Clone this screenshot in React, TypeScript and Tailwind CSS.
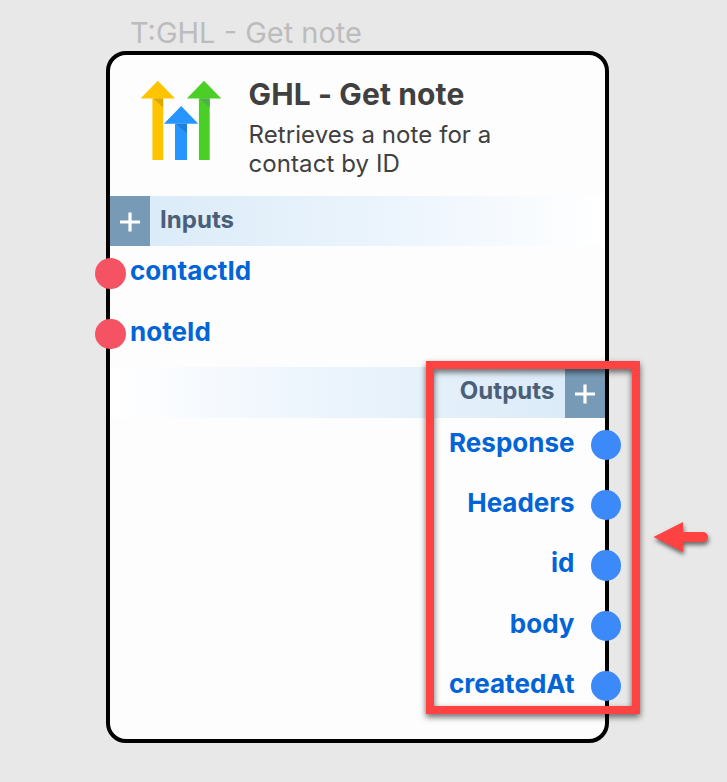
import type { ReactNode } from "react";

const inputs = ["contactId", "noteId"];
const outputs = ["Response", "Headers", "id", "body", "createdAt"];

function GhlLogo() {
  return (
    <svg className="mt-[25px] ml-[30px] h-[82px] w-[84px] shrink-0" viewBox="0 0 84 82">
      <path d="M17.8 0.7 35.1 18.4H0.6Z" fill="#ffc400" />
      <path d="M12.4 18.4h10.8V80H12.4Z" fill="#ffc400" />
      <path d="M13.2 18.4h10V27.5Z" fill="#d9a900" />
      <path d="M64 0.7 81.3 18.4H46.8Z" fill="#4bcf27" />
      <path d="M58.9 18.4h10.8V80H58.9Z" fill="#4bcf27" />
      <path d="M59.7 18.4h10V27.5Z" fill="#4cb04e" />
      <path d="M41.2 26 58.3 43.8H23.9Z" fill="#2795ff" />
      <path d="M35 43.8h12V80h-12Z" fill="#2795ff" />
      <path d="M35.7 43.8h11.3V53.6Z" fill="#1d80df" />
    </svg>
  );
}

function PlusBox() {
  return (
    <div className="flex h-full w-10 shrink-0 items-center justify-center bg-[#779bb7]">
      <svg width="20" height="20" viewBox="0 0 20 20" className="mt-[3px]">
        <path d="M10 0.5v19M0 10h20" stroke="#fff" strokeWidth="3.2" />
      </svg>
    </div>
  );
}

function InputRow({ children }: { children: ReactNode }) {
  return (
    <div className="-ml-[14.5px] flex h-[60.6px] items-start">
      <span className="mt-[12px] h-[30.5px] w-[30.5px] rounded-full bg-[#f55364]" />
      <span className="ml-[4.5px] mt-[7px] leading-9 tracking-[0.05px]">{children}</span>
    </div>
  );
}

function OutputRow({ children }: { children: ReactNode }) {
  return (
    <div className="-mr-4 flex h-[60.35px] items-start justify-end">
      <span className="mr-4 mt-[7px] leading-9">{children}</span>
      <span className="mt-[12px] h-[30.5px] w-[30.5px] rounded-full bg-[#3c8afa]" />
    </div>
  );
}

export default function App() {
  return (
    <div className="relative h-[782px] w-[727px] overflow-hidden bg-[#e8e8e8] pl-[105.5px] pt-[15px] font-['Inter',sans-serif]">
      <div className="h-9 pl-[24.5px] text-[29px] leading-9 whitespace-nowrap text-[#bcbcbc]">T:GHL - Get note</div>
      <div className="h-[692px] w-[503.5px] rounded-[20px] border-4 border-black bg-[#fdfdfd]">
        <div className="flex h-[140.5px]">
          <GhlLogo />
          <div className="ml-[25px] mt-[20px] text-[#404040]">
            <h1 className="text-[30px] leading-[38px] font-bold tracking-[0.12px] whitespace-nowrap">GHL - Get note</h1>
            <p className="mt-[7px] text-[24px] leading-[29px] tracking-[0.08px] whitespace-nowrap">
              Retrieves a note for a<br />contact by ID
            </p>
          </div>
        </div>
        <div className="flex h-[50.5px] bg-linear-to-r from-[#d8eaf7] via-[#edf5fd] via-60% to-white">
          <PlusBox />
          <span className="ml-[10.5px] mt-[6px] text-[24px] leading-9 font-bold tracking-[0.05px] text-[#4b6078]">Inputs</span>
        </div>
        <div className="h-[121px] text-[26px] font-bold text-[#0264d7]">
          {inputs.map((name) => <InputRow key={name}>{name}</InputRow>)}
        </div>
        <div className="flex h-[50.5px] justify-end bg-linear-to-l from-[#d8eaf7] via-[#edf5fd] via-60% to-white">
          <span className="mr-[10.5px] mt-[6px] text-[24px] leading-9 font-bold tracking-[0.05px] text-[#4b6078]">Outputs</span>
          <PlusBox />
        </div>
        <div className="text-[26px] font-bold text-[#0264d7]">
          {outputs.map((name) => <OutputRow key={name}>{name}</OutputRow>)}
        </div>
      </div>
      <div className="absolute left-[426px] top-[361px] h-[353px] w-[214px] border-8 border-[#ff4242] [filter:drop-shadow(0_3px_3px_rgba(0,0,0,0.6))]" />
      <svg className="absolute left-[645px] top-[512px] h-[50px] w-[75px] [filter:drop-shadow(1px_3px_2px_rgba(0,0,0,0.55))]" viewBox="0 0 75 50">
        <path d="M8.5 25 38 10V40Z" fill="#ff4242" />
        <path d="M36 25H58" stroke="#ff4242" strokeWidth="10" strokeLinecap="round" />
      </svg>
    </div>
  );
}
